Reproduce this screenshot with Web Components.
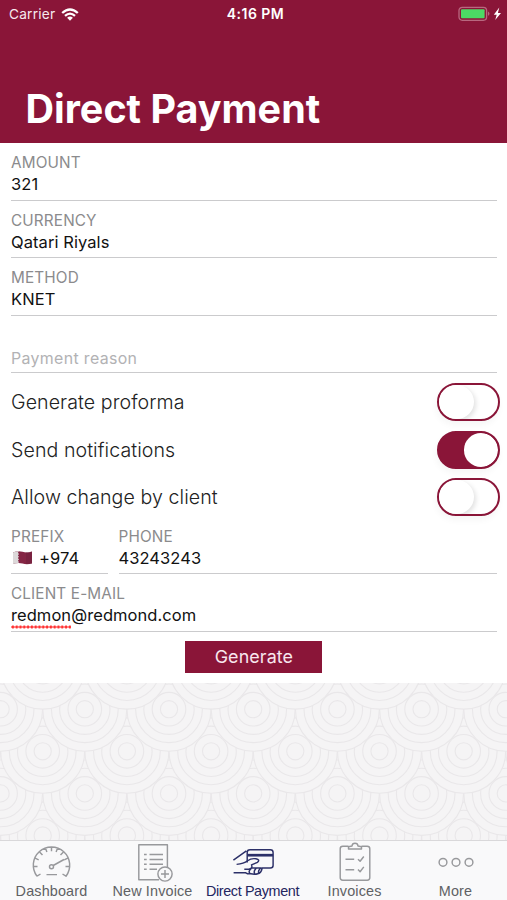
<!DOCTYPE html>
<html lang="en">
<head>
<meta charset="utf-8">
<title>Direct Payment</title>
<style>
html, body { margin: 0; height: 900px; overflow: hidden; }
body { font-family: Inter, "Liberation Sans", sans-serif; }
</style>
</head>
<body>
<payment-app></payment-app>
<script>
const define = (name, html, setup) => customElements.define(name, class extends HTMLElement {
  connectedCallback() {
    if (this.shadowRoot) return;
    const root = this.attachShadow({ mode: "open" });
    const t = document.createElement("template");
    t.innerHTML = html;
    root.append(t.content.cloneNode(true));
    if (setup) setup(this, root);
  }
});

define("status-bar", `
<style>
:host { display: grid; grid-template-columns: 1fr auto 1fr; align-items: center; height: 28px; padding: 0 5px 0 9px; color: #f6e9ee; font-size: 13.7px; line-height: 28px; }
.left, .right { display: flex; align-items: center; }
.left { gap: 6px; letter-spacing: .22px; }
.right { justify-content: flex-end; }
.time { font-weight: 600; font-size: 14px; letter-spacing: .45px; color: #fff; }
svg { display: block; }
</style>
<div class="left"><span>Carrier</span>
<svg width="18" height="13" viewBox="0 0 18 13"><g fill="none" stroke="#fff" stroke-width="2.3"><path d="M1.2 5 Q9 -2.1 16.8 5"/><path d="M4 7.9 Q9 3.4 14 7.9"/></g><path d="M6.1 9.7 Q9 7.3 11.9 9.7 L9 12.7Z" fill="#fff"/></svg></div>
<div class="time">4:16 PM</div>
<div class="right"><svg width="44" height="16" viewBox="0 0 44 16"><rect x="1" y="1.3" width="27.6" height="13" rx="3.2" fill="none" stroke="#b8687f" stroke-width="1.3"/><rect x="3" y="3.3" width="23.6" height="9" rx="1" fill="#4cd964"/><path d="M30 5.6 Q33 7.8 30 10Z" fill="#b8687f"/><path d="M41.3 1.6 L35.8 8.8 H38.7 L37.2 14 L43 6.9 H39.9Z" fill="#fff"/></svg></div>`);

define("page-header", `
<style>
:host { display: flex; flex-direction: column; height: 142.5px; background: #8a1538; box-sizing: border-box; }
h1 { margin: 56px 0 0 25.5px; color: #fff; font-size: 39.5px; line-height: 50px; font-weight: 700; letter-spacing: 0; white-space: nowrap; }
</style>
<status-bar></status-bar><h1><slot></slot></h1>`);

define("form-field", `
<style>
:host { display: block; box-sizing: border-box; height: 57.6px; padding-top: 10px; border-bottom: 1.5px solid #cbcbcd; white-space: nowrap; min-width: 0; }
.label { font-size: 15.3px; line-height: 20px; color: #8b8b8d; letter-spacing: .14px; font-weight: 380; }
.value { font-size: 16.5px; line-height: 23px; color: #111; letter-spacing: .07px; display: flex; align-items: center; }
:host([hint]) .label { display: none; }
:host([hint]) .value { color: #b2b2b4; font-size: 15.9px; letter-spacing: .35px; padding-top: 21.5px; }
</style>
<div class="label"></div><div class="value"><slot></slot></div>`,
(el, root) => { root.querySelector(".label").textContent = el.getAttribute("label") || ""; });

define("qatar-flag", `
<style>:host { display: block; margin: 0 6px 0 1px; } svg { display: block; }</style>
<svg width="21" height="16" viewBox="0 0 21 16"><path d="M1 2.4 Q6 .2 10.5 1.8 T20 1.6 V13.5 Q15 15 10.5 13.6 T1 14Z" fill="#842544"/><path d="M1 2.4 Q4 1.1 7 1.2 L5.9 2.7 L7 4 L5.9 5.4 L7 6.7 L5.9 8 L7 9.4 L5.9 10.8 L7 12 L6 13.2 Q3.5 13.1 1 14Z" fill="#dcd8d9"/><path d="M14 2 Q17 2.4 20 1.6 V13.5 Q17 14.3 14 14Z" fill="#641c38" opacity=".35"/></svg>`);

define("toggle-switch", `
<style>
:host { display: block; box-sizing: border-box; width: 63px; height: 38px; border: 2.4px solid #8a1538; border-radius: 19px; background: #fff; box-shadow: -1px 4px 7px #0000000a; overflow: hidden; }
i { display: block; width: 34.5px; height: 34px; border-radius: 50%; background: #fff; box-shadow: 2px 2px 5px #0000001f; }
:host([on]) { background: #8a1538; }
:host([on]) i { margin-left: 24.7px; box-shadow: none; }
</style><i></i>`);

define("toggle-row", `
<style>
:host { display: flex; align-items: center; justify-content: space-between; height: 47.6px; margin-right: -3px; font-size: 19.6px; font-weight: 350; letter-spacing: .07px; color: #222; white-space: nowrap; }
</style><span><slot></slot></span><slot name="control"></slot>`);

define("field-row", `
<style>:host { display: grid; grid-template-columns: 97px 1fr; gap: 10.5px; }</style><slot></slot>`);

define("primary-button", `
<style>
:host { display: block; width: 137px; height: 31.5px; margin: 9.5px 0 0 174.4px; background: #8a1538; color: #f8e7ee; font-size: 17.9px; line-height: 32.5px; text-align: center; letter-spacing: .1px; }
</style><slot></slot>`);

define("misspelled-word", `
<style>
:host { display: block; position: relative; }
:host::after { content: ""; position: absolute; left: 0; right: 0; bottom: -1.5px; height: 4px; background: radial-gradient(circle, #f33 1.3px, #f330 1.8px) 0 0 / 3.8px 4px repeat-x; }
</style><slot></slot>`);

define("wave-backdrop", `
<style>:host { display: block; flex: 1; min-height: 0; background: #f4f3f4; overflow: hidden; } svg { display: block; }</style>
<svg width="507" height="157" viewBox="0 683 507 157"><g fill="#f5f4f5" stroke="#e9e7e9" stroke-width="1.1"></g></svg>`,
(el, root) => {
  const step = 84.2, rise = 42.1, rings = [42, 33.4, 25.2, 16.8, 8.6];
  let out = "";
  // Lower rows first so that each row above overlaps the one beneath it.
  for (let row = 5; row >= -1; row--)
    for (let col = -1; col < 8; col++) {
      const x = 0.6 + col * step + (row % 2 ? step / 2 : 0), y = 709.2 + row * rise;
      out += rings.map(r => `<circle cx="${x}" cy="${y}" r="${r}"/>`).join("");
    }
  root.querySelector("g").innerHTML = out;
});

const icons = {
  gauge: `<g transform="translate(-.5 1)"><path d="M5.5 33.2 A18.2 18.2 0 1 1 34.5 33.2 L31 31 M5.5 33.2 L9 31 M2 23.5H6 M34 23.5H38 M3.6 15.2L7.2 16.8 M8.3 9.2L11 12 M14 5.3L15.4 9 M20 4.5V8.3 M26 5.3L24.6 9 M31.7 9.2L29 12 M36.2 15.2L32.8 16.8 M15 31.6H25.5 M21.7 22.5L32.5 16.5"/><circle cx="20" cy="23.8" r="2"/></g>`,
  sheet: `<path d="M26 37.7H5.8V2.8H34.4V26 M11 12.4H13.7 M16.5 12.4H30 M11 17.4H13.7 M16.5 17.4H30 M11 22.2H13.7 M16.5 22.2H30 M11 27.2H13.7 M16.5 27.2H24"/><circle cx="32" cy="32" r="7.1"/><path d="M32 28V36 M28 32H36"/>`,
  card: `<g transform="translate(-1.2 0)"><path d="M14.4 20.5V10.5Q14.4 7.8 17.2 7.8H37.5Q40.3 7.8 40.3 10.5V23.5Q40.3 26 37.5 26H29 M.6 18.2L13.6 8.9"/><path d="M14.4 13.2H40.3" stroke-width="2.7"/><path d="M3.8 22.4Q11 21.8 14.8 18.8Q18.5 16 23.2 16.8Q27.6 17.6 24.7 20.3L18.7 22.8Q20.2 26.2 16 27.2H11.5 M.8 30.8H13Q15 32.2 18 31.8Q22 32.6 25 31.7Q28.3 31.4 29.4 26 M18.5 26.5Q15 29.5 17.2 31.4 M23.5 26Q20.2 29.6 22 31.6 M28 26Q24.8 28.7 26 31.4 M18.7 26H29"/></g>`,
  clipboard: `<path d="M13.5 4.2H7.8Q5.2 4.2 5.2 6.8V35.8Q5.2 38.2 7.8 38.2H32.2Q34.8 38.2 34.8 35.8V6.8Q34.8 4.2 32.2 4.2H26.5 M13.5 6.9V4.7L17 4Q17.2 1.3 20 1.3T23 4L26.5 4.7V6.9Z M10.5 17.3H19.2 M23 17.2L25.1 19.3L28.8 14.5 M10.5 27.7H19.2 M23 27.6L25.1 29.7L28.8 24.9"/>`,
  dots: `<circle cx="7" cy="20.3" r="3.9"/><circle cx="20" cy="20.3" r="3.9"/><circle cx="33" cy="20.3" r="3.9"/>`
};
define("tab-item", `
<style>
:host { display: flex; flex-direction: column; align-items: center; color: #606164; font-family: "Liberation Sans", sans-serif; font-size: 14.4px; letter-spacing: .15px; line-height: 16px; white-space: nowrap; --ink: #98999c; padding-top: 1px; min-width: 0; }
:host([active]) { color: #24265f; --ink: #2c3068; letter-spacing: -.38px; }
:host([active]) span { margin-left: -2px; }
svg { display: block; width: 42px; height: 40px; overflow: visible; fill: none; stroke: var(--ink); stroke-width: 1.45; stroke-linejoin: round; }
span { margin-top: .5px; }
</style><svg viewBox="0 0 40 40"></svg><span><slot></slot></span>`,
(el, root) => { root.querySelector("svg").innerHTML = icons[el.getAttribute("icon")]; });

define("tab-bar", `
<style>:host { display: grid; grid-template-columns: repeat(5, 101px); height: 60px; box-sizing: border-box; border-top: 1px solid #d9d8da; background: #f9f9fa; padding-left: 1px; }</style><slot></slot>`);

define("payment-app", `
<style>
:host { display: flex; flex-direction: column; width: 507px; height: 900px; background: #fff; overflow: hidden; }
main { display: block; height: 540.5px; box-sizing: border-box; padding: .5px 10px 0 11px; background: #fff; }
.gap { height: 5px; }
.pull { margin-top: -4.5px; }
</style>
<page-header>Direct Payment</page-header>
<main>
<form-field label="AMOUNT">321</form-field>
<form-field label="CURRENCY">Qatari Riyals</form-field>
<form-field label="METHOD">KNET</form-field>
<form-field hint>Payment reason</form-field>
<div class="gap"></div>
<toggle-row>Generate proforma<toggle-switch slot="control"></toggle-switch></toggle-row>
<toggle-row>Send notifications<toggle-switch slot="control" on></toggle-switch></toggle-row>
<toggle-row>Allow change by client<toggle-switch slot="control"></toggle-switch></toggle-row>
<div class="pull"></div>
<field-row><form-field label="PREFIX"><qatar-flag></qatar-flag>+974</form-field><form-field label="PHONE">43243243</form-field></field-row>
<form-field label="CLIENT E-MAIL"><misspelled-word>redmon</misspelled-word>@redmond.com</form-field>
<primary-button>Generate</primary-button>
</main>
<wave-backdrop></wave-backdrop>
<tab-bar>
<tab-item icon="gauge">Dashboard</tab-item><tab-item icon="sheet">New Invoice</tab-item><tab-item icon="card" active>Direct Payment</tab-item><tab-item icon="clipboard">Invoices</tab-item><tab-item icon="dots">More</tab-item>
</tab-bar>`);
</script>
</body>
</html>
